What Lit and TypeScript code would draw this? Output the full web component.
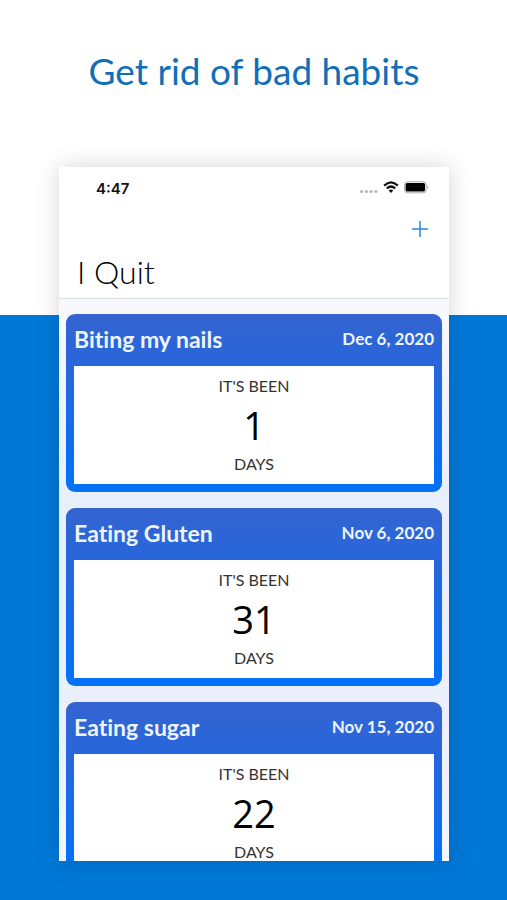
import { LitElement, html, css } from "lit";
import { customElement, property } from "lit/decorators.js";

interface Habit {
  name: string;
  since: string;
  days: number;
}

const habits: Habit[] = [
  { name: "Biting my nails", since: "Dec 6, 2020", days: 1 },
  { name: "Eating Gluten", since: "Nov 6, 2020", days: 31 },
  { name: "Eating sugar", since: "Nov 15, 2020", days: 22 },
];

@customElement("habit-card")
export class HabitCard extends LitElement {
  @property({ attribute: false }) habit!: Habit;

  static styles = css`
    :host {
      display: block;
      flex: none;
    }
    .card {
      padding: 0 8px 8px;
      border-radius: 9px;
      background: linear-gradient(#3464d0, #2667dd 33%, #0471f6 92%);
    }
    .head {
      display: flex;
      align-items: center;
      justify-content: space-between;
      box-sizing: border-box;
      height: 52px;
      padding-bottom: 2px;
      color: #eef4ff;
    }
    .name {
      margin: 0;
      font-size: 23px;
      line-height: 28px;
      font-weight: 700;
    }
    .since {
      font-size: 17px;
      line-height: 28px;
      font-weight: 700;
    }
    .count {
      display: flex;
      flex-direction: column;
      align-items: center;
      padding: 8px 0;
      background: #fff;
    }
    .label {
      font-size: 16px;
      line-height: 24px;
      color: #333;
    }
    .days {
      font-family: "Open Sans", "Noto Sans", sans-serif;
      font-size: 38px;
      line-height: 54px;
      font-weight: 500;
      color: #000;
    }
  `;

  render() {
    const { name, since, days } = this.habit;
    return html`
      <article class="card">
        <header class="head">
          <h2 class="name">${name}</h2>
          <time class="since">${since}</time>
        </header>
        <div class="count">
          <span class="label">IT'S BEEN</span>
          <span class="days">${days}</span>
          <span class="label">DAYS</span>
        </div>
      </article>
    `;
  }
}

@customElement("app-root")
export class AppRoot extends LitElement {
  static styles = css`
    :host {
      display: flex;
      flex-direction: column;
      box-sizing: border-box;
      height: 100vh;
      padding: 0 58px 39px 59px;
      background: linear-gradient(#fff 35%, #0078d8 35%);
      font-family: Lato, "Liberation Sans", sans-serif;
      font-variant-ligatures: none;
    }
    .tagline {
      margin: 0;
      padding: 47px 0 72px;
      font-size: 37px;
      line-height: 48px;
      font-weight: 400;
      text-align: center;
      white-space: nowrap;
      color: #116eb8;
    }
    .phone {
      display: flex;
      flex-direction: column;
      flex: 1;
      min-height: 0;
      overflow: hidden;
      border-radius: 2px 2px 0 0;
      background: #fff;
      box-shadow: 0 0 24px rgba(0, 0, 0, 0.17);
    }
    .status {
      display: flex;
      align-items: center;
      justify-content: space-between;
      flex: none;
      height: 42px;
      padding: 0 19px 0 37px;
    }
    .time {
      font: 600 15px Inter, sans-serif;
      color: #111;
    }
    .indicators {
      display: block;
    }
    .nav {
      display: flex;
      justify-content: flex-end;
      flex: none;
      padding: 8px 17px 0;
    }
    .add {
      display: grid;
      place-items: center;
      width: 24px;
      height: 24px;
      padding: 0;
      border: 0;
      background: none;
      cursor: pointer;
    }
    .title {
      flex: none;
      margin: 0;
      padding: 13px 18px 8px;
      border-bottom: 1px solid #dcdde0;
      font-size: 32px;
      line-height: 36px;
      font-weight: 300;
      color: #000;
    }
    .list {
      display: flex;
      flex-direction: column;
      flex: 1;
      gap: 16px;
      min-height: 0;
      overflow: hidden;
      padding: 15px 7px 0;
      background: linear-gradient(#f7f9fe, #e9eefb 36%, #ebeefb 70%, #f2f6fd);
    }
  `;

  render() {
    return html`
      <h1 class="tagline">Get rid of bad habits</h1>
      <main class="phone">
        <div class="status">
          <span class="time">4:47</span>
          <svg class="indicators" width="72" height="16" viewBox="0 0 72 16" aria-hidden="true">
            <g fill="#b4b4b4">
              <circle cx="3.5" cy="11.5" r="1.6" />
              <circle cx="8.3" cy="11.5" r="1.6" />
              <circle cx="13.1" cy="11.5" r="1.6" />
              <circle cx="17.9" cy="11.5" r="1.6" />
            </g>
            <g fill="none" stroke="#111" stroke-width="2.3">
              <path d="M26.2 5.6 Q33 -0.8 39.8 5.6" />
              <path d="M28.8 8.5 Q33 4.6 37.2 8.5" />
            </g>
            <path d="M30.7 10.4 Q33 8.4 35.3 10.4 L33 13 Z" fill="#111" />
            <rect x="46.6" y="1.8" width="21.6" height="11" rx="3" fill="#fff" stroke="#aaa" />
            <rect x="47.6" y="3" width="19.4" height="8.6" rx="1.5" fill="#000" />
            <path d="M69.4 5.3 Q71.4 7.3 69.4 9.3 Z" fill="#aaa" />
          </svg>
        </div>
        <div class="nav">
          <button class="add" type="button" aria-label="Add habit">
            <svg width="18" height="18" viewBox="0 0 18 18" aria-hidden="true">
              <path d="M9 1V17M1 9H17" fill="none" stroke="#2b86dc" stroke-width="1.5" />
            </svg>
          </button>
        </div>
        <h2 class="title">I Quit</h2>
        <section class="list">
          ${habits.map((habit) => html`<habit-card .habit=${habit}></habit-card>`)}
        </section>
      </main>
    `;
  }
}
